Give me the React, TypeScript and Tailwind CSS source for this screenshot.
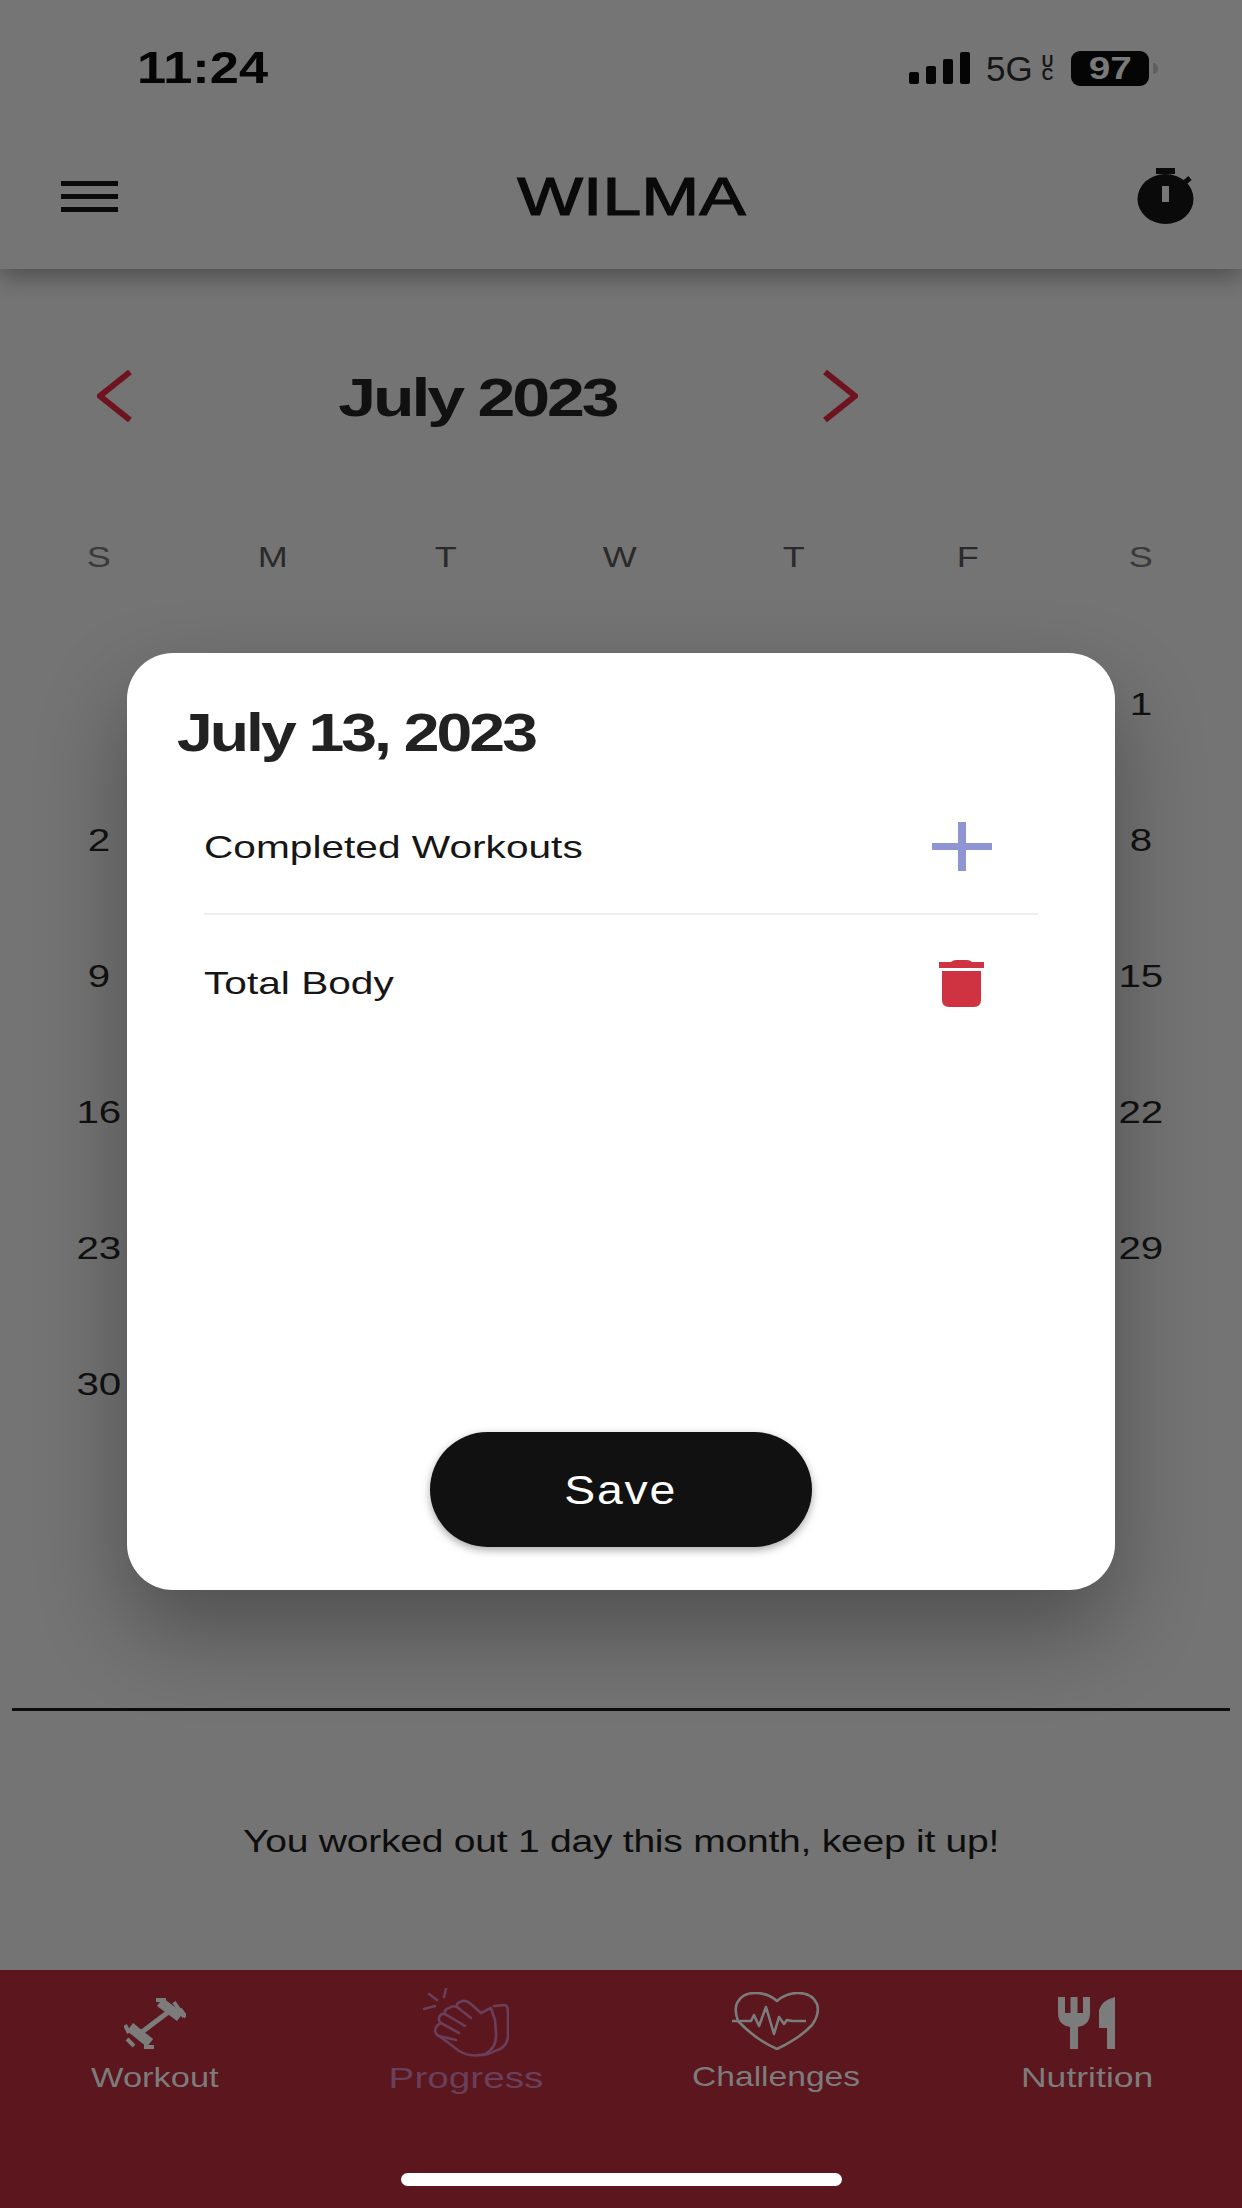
import React from "react";

const font = "font-['Liberation_Sans',Arial,sans-serif]";

function Hamburger() {
  return (
    <div className="flex flex-col gap-[8px] w-[57px]">
      <div className="h-[5px] bg-[#0a0a0a]" />
      <div className="h-[5px] bg-[#0a0a0a]" />
      <div className="h-[5px] bg-[#0a0a0a]" />
    </div>
  );
}

function Stopwatch() {
  return (
    <svg width="57" height="56" viewBox="0 0 57 56" className="block">
      <rect x="19" y="0" width="19" height="6" fill="#0a0a0a" />
      <path d="M46 16 L53 10" stroke="#0a0a0a" strokeWidth="5" />
      <ellipse cx="28.5" cy="31" rx="28" ry="25" fill="#0a0a0a" />
      <rect x="25" y="18" width="7" height="16" fill="#777777" />
    </svg>
  );
}

function Chevron({ right }: { right?: boolean }) {
  return (
    <svg width="36" height="52" viewBox="0 0 36 52" className="block -mt-[3px]">
      <path
        d={right ? "M3 2 L33 26 L3 50" : "M33 2 L3 26 L33 50"}
        fill="none"
        stroke="#6e1420"
        strokeWidth="6"
      />
    </svg>
  );
}

function Plus() {
  return (
    <svg width="60" height="49" viewBox="0 0 60 49" className="block">
      <rect x="0" y="21" width="60" height="7" fill="#8f95d3" />
      <rect x="26" y="0" width="8" height="49" fill="#8f95d3" />
    </svg>
  );
}

function Trash() {
  return (
    <svg width="45" height="47" viewBox="0 0 45 47" className="block">
      <path d="M0 2 H12 Q14 0 17 0 H28 Q31 0 33 2 H45 V8 H0 Z" fill="#cf3341" />
      <path d="M3 11 H42 V40 Q42 47 35 47 H10 Q3 47 3 40 Z" fill="#cf3341" />
    </svg>
  );
}

function Dumbbell() {
  return (
    <svg width="62" height="52" viewBox="0 0 62 52" className="block">
      <path d="M14 38 L47 13" stroke="#7c7c7c" strokeWidth="5" />
      <path d="M36 5 L56 20" stroke="#7c7c7c" strokeWidth="10" />
      <path d="M32 3 L42 3 M50 5 L60 20 M56 12 L62 20" stroke="#7c7c7c" strokeWidth="4" />
      <path d="M6 30 L26 46" stroke="#7c7c7c" strokeWidth="10" />
      <path d="M1 28 L5 36 M3 42 L10 49 M20 50 L30 50" stroke="#7c7c7c" strokeWidth="4" />
    </svg>
  );
}

function Clap() {
  return (
    <svg width="86" height="70" viewBox="0 0 86 70" className="block" fill="none" stroke="#6a3f5a" strokeWidth="2.6" strokeLinecap="round" strokeLinejoin="round">
      <path d="M23 1 L21 9 M6 6 L14 12 M1 21 L12 18" />
      <path d="M58 25 L48 16 Q42 11 37 14 Q33 15 34 19 L48 30" />
      <path d="M34 19 Q30 17 26 20 Q21 21 22 26 L42 38" />
      <path d="M22 26 Q17 25 16 30 Q15 33 18 35 L36 45" />
      <path d="M18 35 Q12 38 12 43 Q13 47 16 48 L33 52" />
      <path d="M16 48 Q26 55 36 63 Q48 70 62 66 Q74 60 73 45 L72 32 L68 20 L58 25" />
      <path d="M71 18 L81 17 Q85 17 85 24 L85 50 Q83 60 72 63 Q67 66 60 67" />
    </svg>
  );
}

function Heart() {
  return (
    <svg width="88" height="58" viewBox="0 0 88 58" className="block" fill="none" stroke="#7c7c7c" strokeWidth="2.6" strokeLinejoin="round">
      <path d="M6 29 Q2 18 5 11 Q10 1 23 1 Q36 1 45 9 Q54 1 66 1 Q80 1 85 12 Q88 22 80 33 Q68 46 45 57 Q24 48 6 29 Z" />
      <path d="M0 29 H19 L22 23 L27 34 L34 15 L42 42 L47 25 L52 32 L55 28 L60 29 H74" />
    </svg>
  );
}

function Cutlery() {
  return (
    <svg width="58" height="52" viewBox="0 0 58 52" className="block">
      <path d="M0 0 H7 V16 H12.5 V0 H19.5 V16 H25 V0 H32 V16 Q32 28 20 30 V52 H12 V30 Q0 28 0 16 Z" fill="#7c7c7c" />
      <path d="M57 0 V52 H49 V31 H41 V13 Q44 3 57 0 Z" fill="#7c7c7c" />
    </svg>
  );
}

const dayLabels = ["S", "M", "T", "W", "T", "F", "S"];
const weeks = [
  ["", "1"],
  ["2", "8"],
  ["9", "15"],
  ["16", "22"],
  ["23", "29"],
  ["30", ""],
];

export default function App() {
  return (
    <div className={`${font} relative w-[1242px] h-[2208px] overflow-hidden bg-[#747474] flex flex-col text-[#111111]`}>
      {/* Top bar */}
      <header className="relative z-10 h-[269px] shrink-0 bg-[#757575] shadow-[0_8px_22px_rgba(0,0,0,0.32)] flex flex-col">
        <div className="h-[136px] flex items-center justify-between pl-[137px] pr-[84px]">
          <span className="inline-block origin-left scale-x-[1.19] text-[44px] font-bold leading-none text-[#050505]">11:24</span>
          <div className="flex items-center">
            <div className="flex items-end gap-[7px]">
              <div className="w-[10px] h-[12px] rounded-[2px] bg-[#050505]" />
              <div className="w-[10px] h-[18px] rounded-[2px] bg-[#050505]" />
              <div className="w-[10px] h-[25px] rounded-[2px] bg-[#050505]" />
              <div className="w-[10px] h-[32px] rounded-[2px] bg-[#050505]" />
            </div>
            <span className="ml-[16px] inline-block w-[52px] text-[35px] leading-none text-[#151515]">5G</span>
            <span className="ml-[2px] w-[15px] flex flex-col items-center text-[16px] font-bold leading-[13px] text-[#151515]">
              <span>U</span>
              <span>C</span>
            </span>
            <div className="ml-[16px] w-[78px] h-[35px] rounded-[9px] bg-[#050505] flex items-center justify-center">
              <span className="inline-block scale-x-[1.25] text-[31px] font-bold leading-none text-[#7a7a7a]">97</span>
            </div>
            <div className="ml-[4px] w-[5px] h-[11px] rounded-r-full bg-[#5f5f5f]" />
          </div>
        </div>
        <div className="h-[120px] flex items-center justify-between pl-[61px] pr-[48px]">
          <Hamburger />
          <span className="ml-[8px] inline-block scale-x-[1.29] text-[54px] font-normal leading-none text-[#0a0a0a] [-webkit-text-stroke:1.2px_#0a0a0a]">WILMA</span>
          <Stopwatch />
        </div>
      </header>

      {/* Calendar */}
      <main className="flex-1 flex flex-col">
        <div className="mt-[78px] h-[100px] w-[858px] pl-[97px] flex items-center justify-between">
          <Chevron />
          <span className="inline-block scale-x-[1.26] text-[54px] font-bold tracking-[-2.5px] leading-none">July 2023</span>
          <Chevron right />
        </div>
        <div className="mt-[90px] h-[40px] pl-[12px] pr-[14px] grid grid-cols-7 items-center text-center">
          {dayLabels.map((d, i) => (
            <span key={i} className={`inline-block scale-x-[1.2] text-[30px] leading-none ${i === 0 || i === 6 ? "text-[#3a3a3a]" : "text-[#2a2a2a]"}`}>
              {d}
            </span>
          ))}
        </div>
        <div className="mt-[59px] pl-[12px] pr-[14px] flex flex-col">
          {weeks.map(([left, right], i) => (
            <div key={i} className="h-[136px] grid grid-cols-7 items-center text-center">
              <span className="col-start-1 inline-block scale-x-[1.3] text-[31px] leading-none text-[#111111]">{left}</span>
              <span className="col-start-7 inline-block scale-x-[1.3] text-[31px] leading-none text-[#111111]">{right}</span>
            </div>
          ))}
        </div>
        <div className="mt-[256px] mx-[12px] h-[3px] bg-[#0d0d0d]" />
        <p className="mt-[113px] text-center">
          <span className="inline-block scale-x-[1.26] text-[31px] leading-[36px] tracking-[-0.2px] text-[#0d0d0d]">You worked out 1 day this month, keep it up!</span>
        </p>
      </main>

      {/* Tab bar */}
      <footer className="h-[238px] shrink-0 bg-[#5b161e] flex flex-col">
        <div className="grid grid-cols-4 pt-[18px]">
          <div className="flex flex-col items-center">
            <div className="h-[70px] flex items-center"><Dumbbell /></div>
            <span className="h-[40px] flex items-center scale-x-[1.23] text-[28px] leading-none text-[#7c7c7c]">Workout</span>
          </div>
          <div className="flex flex-col items-center">
            <div className="h-[70px] flex items-center"><Clap /></div>
            <span className="h-[40px] flex items-center scale-x-[1.29] text-[30px] leading-none text-[#6a3f5a]">Progress</span>
          </div>
          <div className="flex flex-col items-center">
            <div className="h-[70px] flex items-center -mt-[2px]"><Heart /></div>
            <span className="h-[40px] mt-[1px] flex items-center scale-x-[1.2] text-[28px] leading-none text-[#7c7c7c]">Challenges</span>
          </div>
          <div className="flex flex-col items-center">
            <div className="h-[70px] flex items-center"><Cutlery /></div>
            <span className="h-[40px] flex items-center scale-x-[1.27] text-[28px] leading-none text-[#7c7c7c]">Nutrition</span>
          </div>
        </div>
        <div className="mt-auto mb-[22px] mx-auto w-[441px] h-[13px] rounded-full bg-white" />
      </footer>

      {/* Modal */}
      <div className="absolute left-[127px] top-[653px] z-20 w-[988px] h-[937px] rounded-[46px] bg-white shadow-[0_40px_90px_rgba(0,0,0,0.32)] flex flex-col">
        <div className="pt-[49px] pl-[50px] h-[127px]">
          <span className="inline-block origin-left scale-x-[1.19] text-[54px] font-bold tracking-[-2.5px] leading-[60px] text-[#222222]">July 13, 2023</span>
        </div>
        <div className="ml-[77px] w-[834px] h-[135px] border-b-2 border-[#eeeeee] flex items-center justify-between pr-[46px]">
          <span className="inline-block origin-left scale-x-[1.27] text-[32px] leading-none text-[#161616]">Completed Workouts</span>
          <Plus />
        </div>
        <div className="ml-[77px] w-[834px] h-[136px] flex items-center justify-between pr-[54px]">
          <span className="inline-block origin-left scale-x-[1.27] text-[32px] leading-none text-[#161616]">Total Body</span>
          <Trash />
        </div>
        <button className="mt-auto mb-[43px] self-center w-[382px] h-[115px] rounded-full bg-[#111111] text-white shadow-[0_3px_8px_rgba(0,0,0,0.35)] flex items-center justify-center">
          <span className="inline-block scale-x-[1.16] text-[40px] tracking-[1.5px] leading-none">Save</span>
        </button>
      </div>
    </div>
  );
}
